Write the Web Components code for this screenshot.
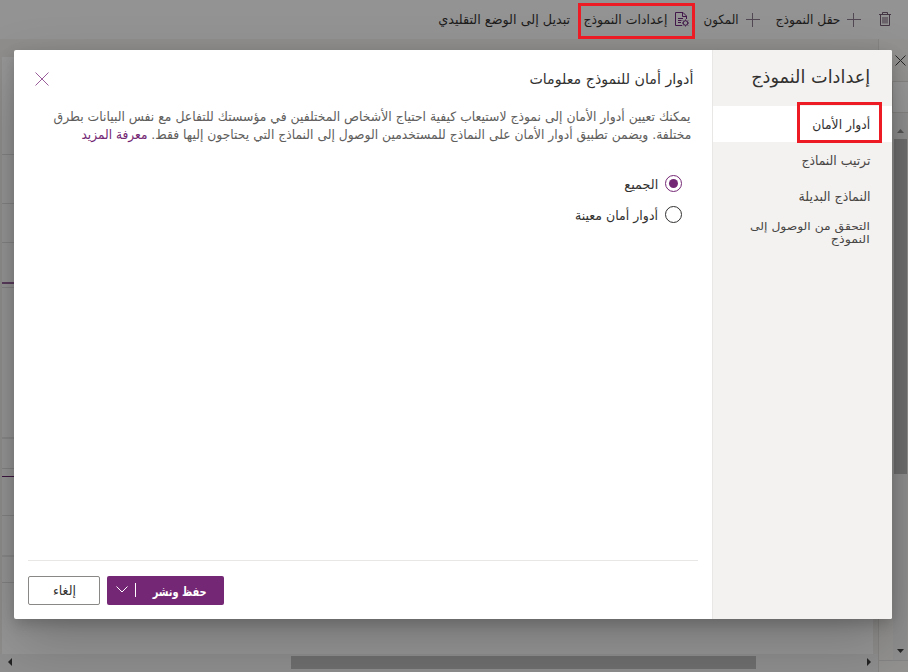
<!DOCTYPE html>
<html lang="ar">
<head>
<meta charset="utf-8">
<title>إعدادات النموذج</title>
<style>
html,body{margin:0;height:100%;overflow:hidden}
body{font-family:"DejaVu Sans",sans-serif;color:#323130}
</style>
</head>
<body>
<form-designer></form-designer>
<script>
const define = (name, html, init) => customElements.define(name, class extends HTMLElement {
  connectedCallback() {
    if (this.shadowRoot) return;
    const t = document.createElement('template');
    t.innerHTML = html;
    this.attachShadow({mode: 'open'}).append(t.content.cloneNode(true));
    if (init) init(this, this.shadowRoot);
  }
});

// One line of text condensed or widened to a given width.
define('fit-text', `
<style>
:host{display:block;flex:none;direction:rtl;white-space:nowrap;text-align:right}
span{display:inline-block;transform-origin:100% 50%;line-height:inherit}
</style><span><slot></slot></span>`, (host, root) => {
  const w = +host.getAttribute('w'), span = root.querySelector('span');
  host.style.width = w + 'px';
  host.style.fontSize = (host.getAttribute('size') || 13) + 'px';
  const natural = span.getBoundingClientRect().width;
  if (natural) span.style.transform = `scaleX(${w / natural})`;
});

define('ui-icon', `
<style>:host{display:block;flex:none}svg{display:block;fill:none;stroke:currentColor}</style><svg></svg>`, (host, root) => {
  const icons = {
    plus: [14, 14, '<path d="M0 6.5h14M6.5 0v14"/>'],
    trash: [12, 15, '<path d="M0 2.5h12M3.500 2V.5h5V2M1.500 3v10.500h9V3M4 5v6.500M6 5v6.500M8 5v6.500" stroke-width=".9"/>'],
    form: [15, 15, '<path d="M7 13.500H.5V.5H8L11.500 4V7M7.500 1v3.500h4M3 6.500h5M3 8.500h3.500M3 10.500h3"/><circle cx="10.500" cy="11" r="2.300"/><path d="M10.500 7.500v1.200M10.500 13.300v1.200M7 11h1.200M12.800 11H14M8 8.500l1 1M12 12.500l1 1M13 8.500l-1 1M9 12.500l-1 1"/>'],
    close: [14, 14, '<path d="M.5.5l13 13M13.500.5l-13 13"/>'],
    small: [11, 11, '<path d="M.5.5l10 10M10.500.5l-10 10"/>'],
    chevron: [12, 7, '<path d="M.5.5L6 6 11.500.5"/>'],
    up: [7, 4, '<path d="M0 4L3.500 0 7 4z" fill="currentColor" stroke="none"/>'],
    down: [7, 4, '<path d="M0 0h7L3.500 4z" fill="currentColor" stroke="none"/>'],
    left: [4, 8, '<path d="M4 0v8L0 4z" fill="currentColor" stroke="none"/>'],
    right: [4, 8, '<path d="M0 0v8l4-4z" fill="currentColor" stroke="none"/>']
  };
  const [w, h, body] = icons[host.getAttribute('name')], svg = root.querySelector('svg');
  svg.setAttribute('width', w); svg.setAttribute('height', h);
  svg.setAttribute('viewBox', `0 0 ${w} ${h}`);
  svg.innerHTML = body;
});

define('command-bar', `
<style>
:host{display:flex;direction:rtl;align-items:center;height:39px;box-sizing:border-box;padding-right:17px;background:#939393;color:#1d1c1b;line-height:38px}
ui-icon{color:#42184a}.p{color:#514853}.t{color:#3b2b3a}
</style>
<ui-icon class="t" name="trash"></ui-icon>
<ui-icon class="p" name="plus" style="margin-right:18px"></ui-icon>
<fit-text w="65" style="margin-right:7px">حقل النموذج</fit-text>
<ui-icon class="p" name="plus" style="margin-right:15px"></ui-icon>
<fit-text w="35" style="margin-right:7px">المكون</fit-text>
<ui-icon name="form" style="margin-right:14px"></ui-icon>
<fit-text w="84" style="margin-right:8px">إعدادات النموذج</fit-text>
<fit-text w="132" style="margin-right:13px">تبديل إلى الوضع التقليدي</fit-text>`);

// Dimmed form canvas behind the dialog.
define('form-canvas', `
<style>
:host{display:grid;grid-template-columns:2px 871px 5px 1fr;grid-template-rows:18px 597px 18px;height:633px;background:#8f8e8c}
.top{grid-column:1/4;background:#8f8e8c}
.rows{grid-column:2;grid-row:2;background:#979797}
.rows div{box-sizing:border-box;border-bottom:1px solid #858585}
.hs{grid-column:1/4;grid-row:3;display:flex;align-items:center;background:#8f8f8f;color:#222;padding:0 2px 2px 8px;box-sizing:border-box}
.hs i{width:465px;height:13px;background:#6f6f6f;margin:0 111px 0 279px}
aside{grid-column:4;grid-row:1/4;border-left:1px solid #868482;background:#939290;display:flex;flex-direction:column;color:#262626}
aside>ui-icon{margin:16px 0 0 16px}
.box{height:30px;margin:15px 0 0 13px;border:1px solid #868482;border-right:0;background:#979797}
.vs{margin:0 1px 0 14px;height:547px;box-sizing:border-box;display:flex;flex-direction:column;align-items:center;background:#8f8f8f;padding-top:16px}
.vs ui-icon:first-child{color:#555}
.vs i{flex:none;width:13px;height:335px;background:#6f6f6f;margin:6px 0 175px}
.end{height:11px;border-top:1px solid #858585}
</style>
<div class="top"></div>
<div class="rows">
<div style="height:98px"></div><div style="height:49px"></div><div style="height:39px"></div>
<div style="height:41px;border-bottom:2px solid #5b3c5e"></div><div style="height:4px"></div>
<div style="height:151px;border-bottom-width:2px;border-color:#8a8a8a"></div><div style="height:30px"></div>
<div style="height:8px;border-color:#3e1540"></div><div style="height:39px"></div>
<div style="height:41px;border-bottom-width:2px;border-color:#8b8b8b"></div><div style="height:26px"></div>
</div>
<div class="hs"><ui-icon name="left"></ui-icon><i></i><ui-icon name="right"></ui-icon></div>
<aside><ui-icon name="small"></ui-icon><div class="box"></div>
<div class="vs"><ui-icon name="up"></ui-icon><i></i><ui-icon name="down"></ui-icon></div><div class="end"></div></aside>`);

define('nav-item', `
<style>
:host{display:flex;flex-direction:column;align-items:flex-end;justify-content:center;height:36px;box-sizing:border-box;padding:1px 22px 0 0;line-height:13px;color:#484644}
:host([selected]){background:#fff;color:#323130}
</style><slot></slot>`);

define('settings-nav', `
<style>
:host{display:block;width:180px;background:#f3f2f1;border-left:1px solid #e8e7e6;box-sizing:border-box}
.h{display:flex;justify-content:flex-end;padding-right:22px;height:56px;line-height:54px}
</style>
<div class="h"><fit-text w="119" size="18">إعدادات النموذج</fit-text></div>
<nav-item selected><fit-text w="58">أدوار الأمان</fit-text></nav-item>
<nav-item><fit-text w="69">ترتيب النماذج</fit-text></nav-item>
<nav-item><fit-text w="72">النماذج البديلة</fit-text></nav-item>
<nav-item><fit-text w="120" size="11">التحقق من الوصول إلى</fit-text><fit-text w="39" size="11">النموذج</fit-text></nav-item>`);

define('radio-option', `
<style>
:host{display:flex;direction:rtl;align-items:center;gap:7px;height:31px;line-height:31px}
i{width:17px;height:17px;box-sizing:border-box;border:1px solid #323130;border-radius:50%;display:flex;align-items:center;justify-content:center}
::slotted(*){padding-top:2px}
:host([checked]) i{border-color:#742774}
:host([checked]) i::after{content:"";width:9px;height:9px;border-radius:50%;background:#742774}
</style><i></i><slot></slot>`);

define('dialog-footer', `
<style>
:host{display:flex;height:59px;box-sizing:border-box;border-top:1px solid #e8e7e6;margin:0 14px;padding-top:15px;gap:7px}
.b{height:29px;box-sizing:border-box;border-radius:2px;display:flex;align-items:center;line-height:27px}
.c{width:72px;border:1px solid #8a8886;justify-content:center}
.s{width:117px;background:#742774;color:#fff;padding-left:9px}
.s ui-icon{margin-bottom:2px}
.s i{width:1px;height:14px;background:#fff;margin:0 17px 1px 7px}
</style>
<div class="b c"><fit-text w="23">إلغاء</fit-text></div>
<div class="b s"><ui-icon name="chevron"></ui-icon><i></i><fit-text w="54" size="12.5" style="font-weight:bold;padding-top:1px">حفظ ونشر</fit-text></div>`);

define('settings-dialog', `
<style>
:host{display:flex;width:878px;height:569px;background:#fff;border-radius:2px;overflow:hidden;box-shadow:0 25px 58px rgba(0,0,0,.22),0 5px 14px rgba(0,0,0,.18)}
main{width:698px;display:flex;flex-direction:column}
header{display:flex;align-items:center;justify-content:space-between;height:58px;padding:0 19px 0 21px;line-height:58px;box-sizing:border-box}
header ui-icon{color:#9a5c9a}
.p{display:flex;flex-direction:column;align-items:flex-end;padding-right:21px;line-height:18px;color:#605e5c}
.l{display:flex;direction:rtl;gap:4px}
.l fit-text+fit-text{color:#742774}
.r{padding:24px 30px 0 0;flex:1}
</style>
<main>
<header><ui-icon name="close"></ui-icon><fit-text w="164" size="14.5">أدوار أمان للنموذج معلومات</fit-text></header>
<div class="p"><fit-text w="637">يمكنك تعيين أدوار الأمان إلى نموذج لاستيعاب كيفية احتياج الأشخاص المختلفين في مؤسستك للتفاعل مع نفس البيانات بطرق</fit-text>
<div class="l"><fit-text w="540">مختلفة. ويضمن تطبيق أدوار الأمان على النماذج للمستخدمين الوصول إلى النماذج التي يحتاجون إليها فقط.</fit-text><fit-text w="66">معرفة المزيد</fit-text></div></div>
<div class="r"><radio-option checked><fit-text w="34">الجميع</fit-text></radio-option><radio-option><fit-text w="83">أدوار أمان معينة</fit-text></radio-option></div>
<dialog-footer></dialog-footer>
</main>
<settings-nav></settings-nav>`);

define('form-designer', `
<style>
:host{display:block;position:relative;width:908px;height:672px;overflow:hidden;background:#939393}
settings-dialog{position:absolute;left:14px;top:50px}
.m{position:absolute;box-sizing:border-box;border:3px solid #ed1c24}
</style>
<command-bar></command-bar><form-canvas></form-canvas><settings-dialog></settings-dialog>
<div class="m" style="left:578px;top:3px;width:117px;height:36px"></div>
<div class="m" style="left:797px;top:102px;width:85px;height:41px"></div>`);
</script>
</body>
</html>
